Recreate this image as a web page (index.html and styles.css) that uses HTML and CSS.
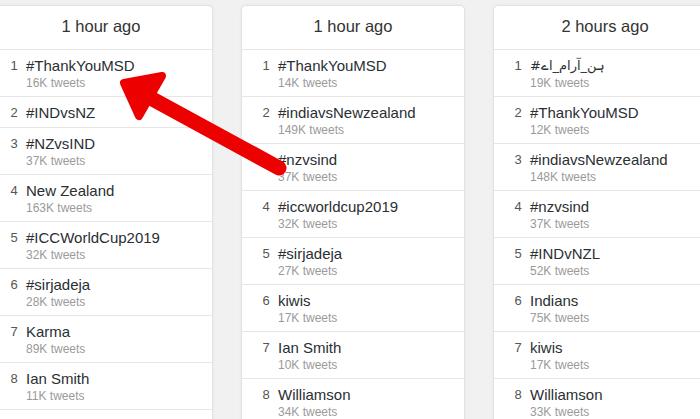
FILE: index.html
```html
<!DOCTYPE html>
<html>
<head>
<meta charset="utf-8">
<link rel="stylesheet" href="styles.css">
</head>
<body>
<div class="page">
  <section class="card">
    <div class="head">1 hour ago</div>
    <div class="row"><span class="num">1</span><div class="info"><div class="name">#ThankYouMSD</div><div class="count">16K tweets</div></div></div>
    <div class="row single"><span class="num">2</span><div class="info"><div class="name">#INDvsNZ</div></div></div>
    <div class="row"><span class="num">3</span><div class="info"><div class="name">#NZvsIND</div><div class="count">37K tweets</div></div></div>
    <div class="row"><span class="num">4</span><div class="info"><div class="name">New Zealand</div><div class="count">163K tweets</div></div></div>
    <div class="row"><span class="num">5</span><div class="info"><div class="name">#ICCWorldCup2019</div><div class="count">32K tweets</div></div></div>
    <div class="row"><span class="num">6</span><div class="info"><div class="name">#sirjadeja</div><div class="count">28K tweets</div></div></div>
    <div class="row"><span class="num">7</span><div class="info"><div class="name">Karma</div><div class="count">89K tweets</div></div></div>
    <div class="row"><span class="num">8</span><div class="info"><div class="name">Ian Smith</div><div class="count">11K tweets</div></div></div>
  </section>
  <section class="card">
    <div class="head">1 hour ago</div>
    <div class="row"><span class="num">1</span><div class="info"><div class="name">#ThankYouMSD</div><div class="count">14K tweets</div></div></div>
    <div class="row"><span class="num">2</span><div class="info"><div class="name">#indiavsNewzealand</div><div class="count">149K tweets</div></div></div>
    <div class="row"><span class="num">3</span><div class="info"><div class="name">#nzvsind</div><div class="count">37K tweets</div></div></div>
    <div class="row"><span class="num">4</span><div class="info"><div class="name">#iccworldcup2019</div><div class="count">32K tweets</div></div></div>
    <div class="row"><span class="num">5</span><div class="info"><div class="name">#sirjadeja</div><div class="count">27K tweets</div></div></div>
    <div class="row"><span class="num">6</span><div class="info"><div class="name">kiwis</div><div class="count">17K tweets</div></div></div>
    <div class="row"><span class="num">7</span><div class="info"><div class="name">Ian Smith</div><div class="count">10K tweets</div></div></div>
    <div class="row"><span class="num">8</span><div class="info"><div class="name">Williamson</div><div class="count">34K tweets</div></div></div>
  </section>
  <section class="card">
    <div class="head">2 hours ago</div>
    <div class="row"><span class="num">1</span><div class="info"><div class="name urdu">#ہن_آرام_اے</div><div class="count">19K tweets</div></div></div>
    <div class="row"><span class="num">2</span><div class="info"><div class="name">#ThankYouMSD</div><div class="count">12K tweets</div></div></div>
    <div class="row"><span class="num">3</span><div class="info"><div class="name">#indiavsNewzealand</div><div class="count">148K tweets</div></div></div>
    <div class="row"><span class="num">4</span><div class="info"><div class="name">#nzvsind</div><div class="count">37K tweets</div></div></div>
    <div class="row"><span class="num">5</span><div class="info"><div class="name">#INDvNZL</div><div class="count">52K tweets</div></div></div>
    <div class="row"><span class="num">6</span><div class="info"><div class="name">Indians</div><div class="count">75K tweets</div></div></div>
    <div class="row"><span class="num">7</span><div class="info"><div class="name">kiwis</div><div class="count">17K tweets</div></div></div>
    <div class="row"><span class="num">8</span><div class="info"><div class="name">Williamson</div><div class="count">33K tweets</div></div></div>
  </section>
</div>
<svg class="arrow" width="700" height="419" viewBox="0 0 700 419">
  <line x1="279" y1="168" x2="145" y2="95" stroke="#ec0000" stroke-width="15" stroke-linecap="round"/>
  <polygon points="124,83 162,76 139,116" fill="#ec0000" stroke="#ec0000" stroke-width="8" stroke-linejoin="round"/>
</svg>
</body>
</html>
```
FILE: styles.css
```css
html, body {
  margin: 0;
  padding: 0;
  background: #f1f1f1;
  overflow: hidden;
  width: 700px;
  height: 419px;
}
body {
  position: relative;
  font-family: "Liberation Sans", Arial, "DejaVu Sans", sans-serif;
}
.page {
  display: flex;
  gap: 28px;
  padding-top: 5px;
  margin-left: -11px;
}
.card {
  flex: 0 0 224px;
  width: 224px;
  box-sizing: border-box;
  background: #fff;
  border: 1px solid #e3e3e3;
  border-radius: 5px;
  box-shadow: 0 0 3px rgba(0,0,0,0.06);
}
.head {
  height: 43px;
  line-height: 40px;
  text-align: center;
  font-size: 16.5px;
  color: #333;
  border-bottom: 1px solid #e6e6e6;
}
.row {
  display: flex;
  align-items: flex-start;
  padding: 7px 8px 4px 17px;
  border-bottom: 1px solid #e6e6e6;
}
.row.single {
  padding-bottom: 5px;
}
.num {
  width: 14px;
  text-align: center;
  font-size: 13px;
  line-height: 18px;
  color: #555;
  margin-right: 5px;
}
.name {
  font-size: 15px;
  line-height: 18px;
  color: #292f33;
}
.urdu {
  font-family: "DejaVu Sans", sans-serif;
  font-size: 13px;
}
.count {
  font-size: 12px;
  line-height: 17px;
  color: #9a9a9a;
}
.arrow {
  position: absolute;
  left: 0;
  top: 0;
}
```
